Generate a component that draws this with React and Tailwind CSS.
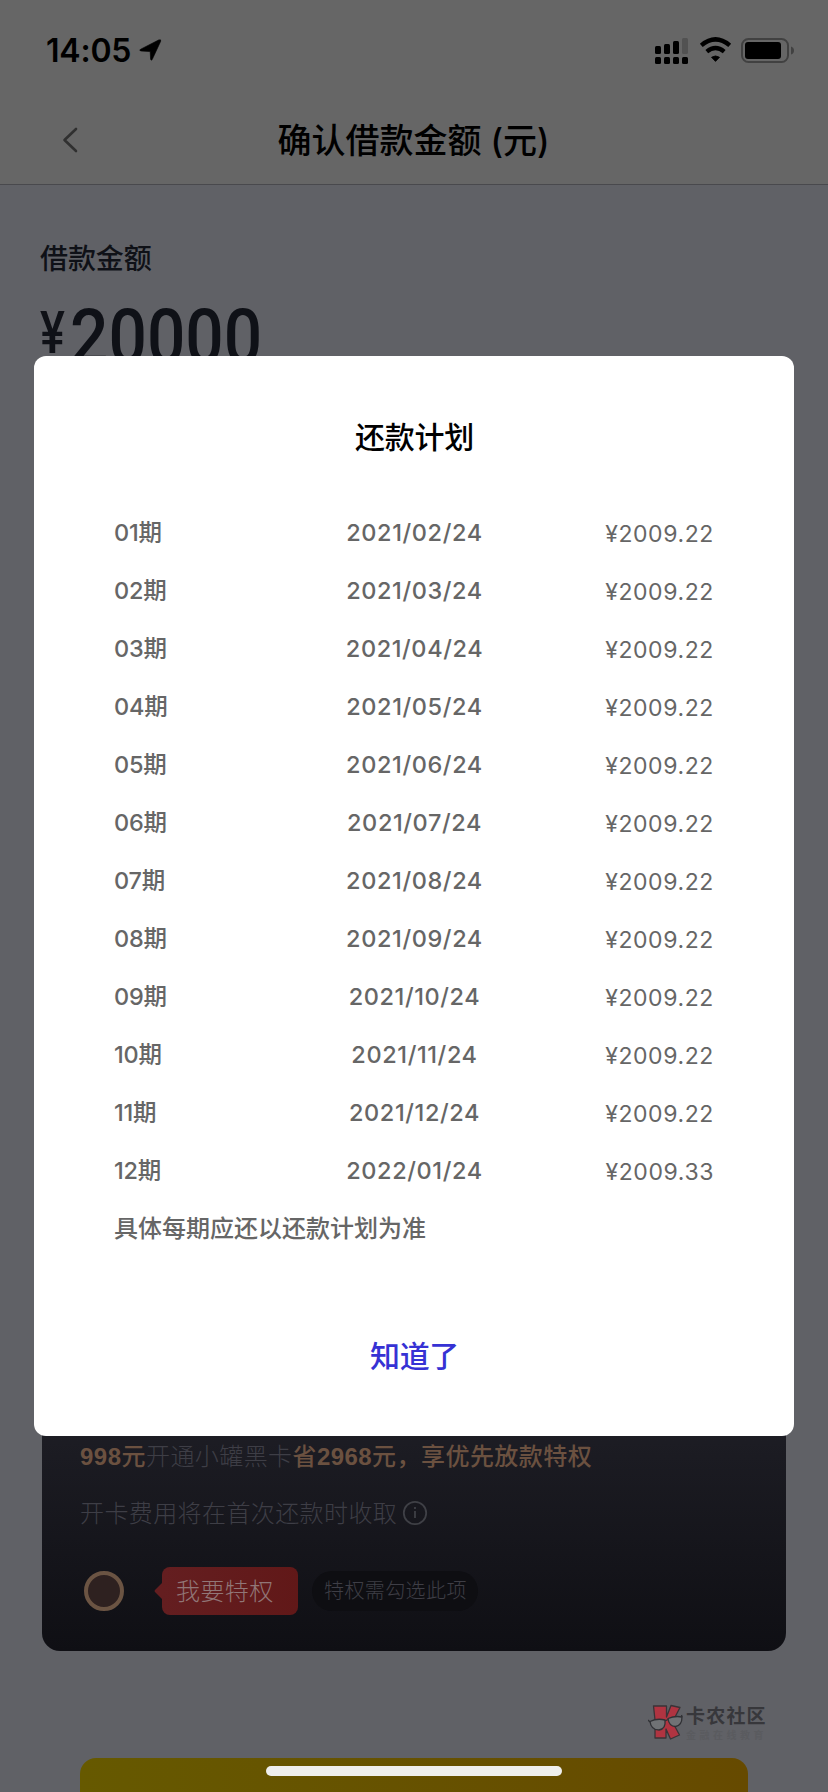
const months = [
  ['01期', '2021/02/24', '¥2009.22'],
  ['02期', '2021/03/24', '¥2009.22'],
  ['03期', '2021/04/24', '¥2009.22'],
  ['04期', '2021/05/24', '¥2009.22'],
  ['05期', '2021/06/24', '¥2009.22'],
  ['06期', '2021/07/24', '¥2009.22'],
  ['07期', '2021/08/24', '¥2009.22'],
  ['08期', '2021/09/24', '¥2009.22'],
  ['09期', '2021/10/24', '¥2009.22'],
  ['10期', '2021/11/24', '¥2009.22'],
  ['11期', '2021/12/24', '¥2009.22'],
  ['12期', '2022/01/24', '¥2009.33'],
];

function StatusBar() {
  return (
    <div className="flex h-[98px] items-center pl-[46px] pr-[33px] pt-[2px] text-black">
      <span className="w-[85px] whitespace-nowrap pt-px text-[32px] font-semibold leading-none tracking-[-0.200px]">14:05</span>
      <svg className="ml-[7px]" width="24" height="24" viewBox="0 0 24 24">
        <path d="M22.600 3.400 14.200 21.600Q13.200 23 12.600 21.200L12.200 13.600 3 13Q.6 12.300 2.700 11.200L20.600 2Q23.600 1 22.600 3.400Z" fill="#000" stroke="#000" strokeWidth="0.600" />
      </svg>
      <svg className="ml-auto" width="141" height="30" viewBox="0 0 141 30">
        <g fill="#000">
          <rect x="1" y="11" width="6" height="8" rx="1.500" />
          <rect x="10" y="9" width="6" height="10" rx="1.500" />
          <rect x="19" y="6" width="6" height="13" rx="1.500" />
          <rect x="28" y="3" width="6" height="16" rx="1.500" fill="#525252" />
          <rect x="1" y="22" width="6" height="7" rx="1.500" />
          <rect x="10" y="22" width="6" height="7" rx="1.500" />
          <rect x="19" y="22" width="6" height="7" rx="1.500" />
          <rect x="28" y="22" width="6" height="7" rx="1.500" />
          <path d="M57.500 22.300Q61.500 19.500 65.500 22.300L61.500 26.400Z" stroke="#000" strokeWidth="0.800" />
        </g>
        <path d="M47.300 10.400Q61.500-1.600 75.700 10.400" fill="none" stroke="#000" strokeWidth="4.400" />
        <path d="M52.800 16.600Q61.500 9.600 70.200 16.600" fill="none" stroke="#000" strokeWidth="4.400" />
        <rect x="88" y="4" width="46" height="23" rx="6.500" fill="none" stroke="#414141" strokeWidth="2" />
        <rect x="91" y="7" width="36" height="17" rx="3" fill="#000" />
        <path d="M137 11.500Q140 12.500 140 15.500T137 19.500Z" fill="#414141" />
      </svg>
    </div>
  );
}

function Logo() {
  return (
    <svg width="36" height="37" viewBox="0 0 36 37">
      <path
        d="M5.500 2H18.500V13L23 1.500 32 3.500 24.500 18 31.500 31 22.500 35 18 25V34H7V16Z"
        fill="#b03441"
        stroke="#3a3337"
        strokeWidth="1.300"
        strokeLinejoin="round"
      />
      <g fill="#707275" stroke="#303135" strokeWidth="1.300">
        <path d="M2 17.500Q9 14 17 16 18 25 11 26 3 26 2 17.500Z" />
        <path d="M20 14.500Q27 11.500 34 13 34 21.500 27.500 22.500 21 22.500 20 14.500Z" />
        <path d="M17 17 20 15.500M2 18 0 16M34 13 33.500 11" />
      </g>
    </svg>
  );
}

function PlanDialog() {
  return (
    <div className="absolute left-[34px] top-[356px] flex h-[1080px] w-[760px] flex-col rounded-[12px] bg-white px-[80px] text-[24px] font-medium text-[#666]">
      <h2 className="mt-[56px] pl-[1px] text-center text-[30px] font-medium leading-[50px] tracking-[-0.200px] text-black">还款计划</h2>
      <div className="mt-[41px]">
        {months.map(([term, date, amount]) => (
          <div key={term} className="grid h-[58px] grid-cols-3 items-center leading-[58px]">
            <span className="text-[23.500px] font-[450] tracking-[-0.200px]">{term}</span>
            <span className="pl-[1px] text-center text-[23.500px] font-[450] tracking-[0.600px]">{date}</span>
            <span className="pt-[2px] text-right text-[23px] font-normal tracking-[0.600px]">{amount}</span>
          </div>
        ))}
      </div>
      <p className="h-[58px] pt-px leading-[58px]">具体每期应还以还款计划为准</p>
      <button className="mt-[74px] pl-[1px] text-[30px] font-medium leading-[50px] tracking-[-0.300px] text-[#3632d4]">知道了</button>
    </div>
  );
}

export default function App() {
  return (
    <div className="relative flex h-[1792px] w-[828px] flex-col overflow-hidden bg-[#606166] font-[Inter,'Noto_Sans_CJK_SC',sans-serif]">
      <header className="h-[185px] shrink-0 border-b border-[#49494d] bg-[#666]">
        <StatusBar />
        <div className="flex h-[84px] items-center justify-center pl-[62px] pr-[62px]">
          <svg width="16" height="26" viewBox="0 0 16 26">
            <path d="M14 2 2.500 13 14 24" fill="none" stroke="#303030" strokeWidth="2.600" strokeLinecap="round" strokeLinejoin="round" />
          </svg>
          <h1 className="flex-1 pr-[17px] pt-[2px] text-center text-[34px] font-medium leading-[50px] text-black">确认借款金额 (元)</h1>
        </div>
      </header>

      <section className="h-[1165px] shrink-0 px-[40px] pt-[54px] text-[#0f1117]">
        <div className="text-[28px] font-medium leading-[40px] tracking-[-0.100px]">借款金额</div>
        <div className="mt-[23px] flex font-[Roboto,sans-serif] leading-[72px]">
          <span className="mt-[-5px] w-[30px] origin-left scale-x-[0.780] text-[60px] font-medium">¥</span>
          <span className="mt-[-1px] origin-left scale-x-[0.890] text-[76px] font-medium">20000</span>
        </div>
      </section>

      <section className="mx-[42px] h-[301px] shrink-0 rounded-b-[18px] bg-linear-to-b from-[#22222a] to-[#0f0f14] px-[38px] pt-[87px] text-[24px] tracking-[0.400px] text-[#3e3e46]">
        <p className="h-[40px] whitespace-nowrap leading-[40px] font-[Liberation_Sans,'Noto_Sans_CJK_SC',sans-serif] font-light">
          <span className="font-medium tracking-[0.500px] text-[#6b5140]"><b className="font-bold">998</b>元</span>开通小罐黑卡<span className="font-medium tracking-[0.450px] text-[#6b5140]">省<b className="font-bold">2968</b>元，享优先放款特权</span>
        </p>
        <div className="mt-[17px] flex h-[40px] items-center font-light leading-[40px]">
          开卡费用将在首次还款时收取
          <svg className="mb-[2px] ml-[5px]" width="26" height="26" viewBox="0 0 26 26" fill="none" stroke="#3f4046" strokeWidth="1.800">
            <circle cx="13" cy="13" r="11.200" />
            <path d="M13 11V18M13 7V9" />
          </svg>
        </div>
        <div className="mt-[33px] flex h-[48px] items-center pl-[4px]">
          <span className="h-[40px] w-[40px] rounded-full border-[4px] border-[#6b5443] bg-[#2e2120]" />
          <svg className="ml-[30px]" width="8" height="16" viewBox="0 0 8 16">
            <path d="M8 0V16L1 9Q0 8 1 7Z" fill="#641e20" />
          </svg>
          <span className="h-[48px] w-[136px] rounded-[8px] bg-linear-to-r from-[#641e20] to-[#611818] pl-[14px] font-light leading-[49px] text-[#917677]">我要特权</span>
          <span className="ml-[14px] h-[40px] w-[166px] rounded-full bg-[#0e0e12] pl-[12px] text-[20px] font-light leading-[40px]">特权需勾选此项</span>
        </div>
      </section>

      <div className="mt-[53px] flex h-[37px] shrink-0 pl-[648px]">
        <Logo />
        <div className="ml-[2px] mt-[3px] flex flex-col">
          <span className="text-[19px] font-bold leading-[20px] tracking-[1.200px] text-[#37373b]">卡农社区</span>
          <span className="mt-[3px] text-[10px] font-bold leading-[11px] tracking-[3.500px] text-[#5a5b5f]">金融在线教育</span>
        </div>
      </div>

      <footer className="mx-[80px] mt-[17px] flex h-[34px] shrink-0 justify-center rounded-t-[16px] bg-linear-to-r from-[#665900] to-[#664a00] pt-[8px]">
        <span className="h-[10px] w-[296px] rounded-full bg-[#efefed]" />
      </footer>

      <PlanDialog />
    </div>
  );
}
